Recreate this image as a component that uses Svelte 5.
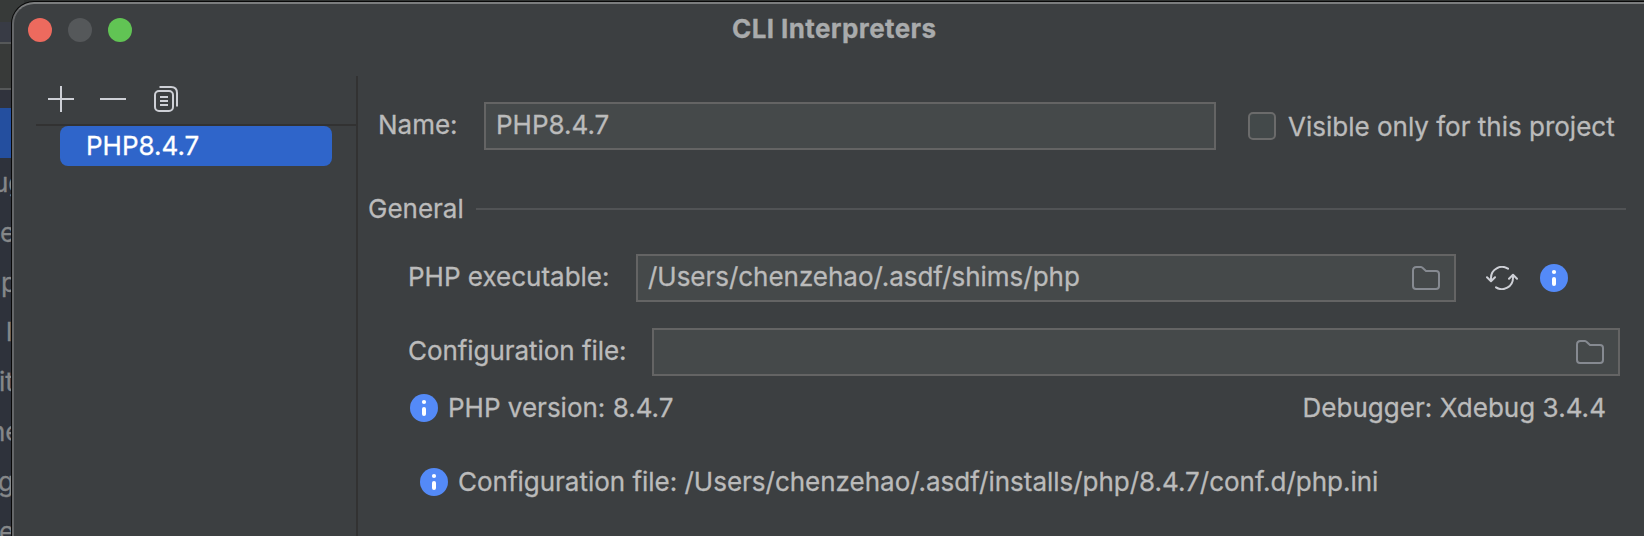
<script>
  const behind = ['ug', 'e', 'p', 'l', 'it', 'ne', 'g', 'e'];
  const offsets = [-7, 0, 1, 6, -1, -10, -2, -1];
</script>

{#snippet info()}
  <svg class="info" viewBox="0 0 28 28"><circle cx="14" cy="14" r="14" fill="#548af7" /><circle cx="14" cy="8" r="2.1" fill="#fff" /><rect x="12" y="13" width="4" height="9" rx="2" fill="#fff" /></svg>
{/snippet}

{#snippet folder()}
  <svg class="folder" viewBox="0 0 28 24"><path d="M1 4.5Q1 1 4.5 1H8.8Q9.6 1 10.2 1.6L14 5H24Q27 5 27 8V20Q27 23 24 23H4Q1 23 1 20Z" fill="none" stroke="#868a91" stroke-width="2" /></svg>
{/snippet}

<div class="screen">
  <div class="backdrop">
    <div class="b-top"></div>
    <div class="b-tab"></div>
    <div class="b-bar"></div>
    <div class="b-gap"></div>
    <div class="b-selected"></div>
    <div class="b-list">
      {#each behind as word, i}
        <div style="margin-left:{offsets[i]}px">{word}</div>
      {/each}
    </div>
  </div>

  <div class="window">
    <header>
      <div class="lights"><i class="red"></i><i class="grey"></i><i class="green"></i></div>
      <h1>CLI Interpreters</h1>
    </header>

    <div class="body">
      <aside>
        <div class="tools">
          <svg width="26" height="26" viewBox="0 0 26 26"><path d="M13 0V26M0 13H26" stroke="#ced0d6" stroke-width="2" /></svg>
          <svg width="26" height="26" viewBox="0 0 26 26"><path d="M0 13H26" stroke="#ced0d6" stroke-width="2" /></svg>
          <svg class="copy" width="24" height="26" viewBox="0 0 24 26" fill="none" stroke="#ced0d6" stroke-width="2"><rect x="1" y="5" width="18" height="20" rx="4" /><path d="M5.5 1H17Q23 1 23 7V20.5M6 11H14M6 15H14M6 19H14" /></svg>
        </div>
        <div class="item">PHP8.4.7</div>
      </aside>

      <main>
        <div class="row name">
          <label for="name">Name:</label>
          <div class="field" id="name"><span>PHP8.4.7</span></div>
          <div class="check"></div>
          <span class="visible">Visible only for this project</span>
        </div>
        <div class="section"><span>General</span><hr /></div>
        <div class="row exe">
          <span class="lab">PHP executable:</span>
          <div class="field"><span>/Users/chenzehao/.asdf/shims/php</span>{@render folder()}</div>
          <svg class="refresh" width="32" height="24" viewBox="0 0 32 24" fill="none" stroke="#ced0d6" stroke-width="2" stroke-linecap="round" stroke-linejoin="round"><path d="M22 2.7A11 11 0 0 0 5 12V15M1 11.2L5 15.2L9 11.2M10 21.3A11 11 0 0 0 27 12V9M23 12.8L27 8.8L31 12.8" /></svg>
          {@render info()}
        </div>
        <div class="row conf">
          <span class="lab">Configuration file:</span>
          <div class="field">{@render folder()}</div>
        </div>
        <div class="row version">
          {@render info()}
          <span class="ver">PHP version: 8.4.7</span>
          <span class="dbg">Debugger: Xdebug 3.4.4</span>
        </div>
        <div class="row ini">
          {@render info()}
          <span class="path">Configuration file: /Users/chenzehao/.asdf/installs/php/8.4.7/conf.d/php.ini</span>
        </div>
      </main>
    </div>
  </div>
</div>

<style>
  :global(body) { margin: 0; background: #3c3f41; overflow: hidden; }
  .screen { width: 1644px; height: 536px; overflow: hidden; display: flex; background: #303332; font: 400 26px/32px Inter, "Liberation Sans", sans-serif; -webkit-text-stroke: 0.3px currentColor; color: #bbb; white-space: nowrap; box-sizing: border-box; }
  .screen * { box-sizing: border-box; }
  .backdrop { width: 24px; flex: none; height: 536px; overflow: hidden; color: #858789; background: #2e323b; }
  .b-top { height: 22px; background: #373a39; }
  .b-tab { height: 20px; background: #383b45; }
  .b-bar { height: 48px; background: #383a39; border-top: 2px solid #565859; border-bottom: 2px solid #565859; }
  .b-gap { height: 18px; background: #30333d; }
  .b-selected { height: 50px; background: #244f9f; }
  .b-list { padding-top: 9px; }
  .b-list div { height: 49.8px; }
  .window { width: 1640px; flex: none; height: 560px; margin: 2px 0 0 -12px; border: 2px solid #656769; border-top-color: #7b7d7e; border-radius: 22px 0 0 0; background: #3c3f41; box-shadow: 0 0 0 1px #080808; }
  header { height: 72px; display: flex; position: relative; padding: 14px 0 0 14px; }
  .lights { display: flex; gap: 16px; }
  .lights i { width: 24px; height: 24px; border-radius: 50%; }
  .red { background: #ed6a5e; }
  .grey { background: #55585a; }
  .green { background: #61c454; }
  h1 { font: 700 26px/32px Inter, sans-serif; margin: -5px 0 0 600px; color: #a9abac; letter-spacing: 0.4px; }
  .body { display: flex; height: 480px; }
  aside { width: 344px; flex: none; border-right: 2px solid #323232; padding-left: 22px; }
  .tools { height: 50px; border-bottom: 2px solid #323232; padding: 10px 0 0 12px; display: flex; gap: 26px; }
  .copy { margin-left: 2px; }
  .item { width: 272px; height: 40px; margin-left: 24px; border-radius: 8px; background: #2f65ca; color: #fff; padding: 4px 0 0 26px; }
  main { flex: 1; padding-top: 26px; }
  .row { display: flex; align-items: center; height: 48px; }
  .field { height: 48px; flex: none; border: 2px solid #646464; background: #45494a; display: flex; align-items: center; justify-content: space-between; padding: 0 14px 0 10px; }
  .field > span, label, .lab { position: relative; top: -1px; }
  label { width: 106px; }
  .name { padding-left: 20px; }
  .name .field { width: 732px; }
  .check { width: 28px; height: 28px; border: 2px solid #6b6b6b; border-radius: 5px; background: #43494a; margin-left: 32px; }
  .visible { margin-left: 12px; padding-top: 2px; }
  .section { height: 32px; margin-top: 43px; padding-left: 10px; display: flex; align-items: center; width: 1268px; }
  .section span { width: 108px; flex: none; }
  hr { flex: 1; height: 2px; border: 0; background: #515355; margin: 0; }
  .exe { margin-top: 29px; }
  .lab { padding-left: 50px; width: 278px; flex: none; }
  .exe .field { width: 820px; letter-spacing: -0.03px; }
  .refresh { margin-left: 30px; }
  .refresh + :global(.info) { margin-left: 22px; }
  .info { width: 28px; height: 28px; flex: none; }
  .folder { width: 28px; height: 24px; margin-left: auto; }
  .conf { margin-top: 26px; }
  .conf .lab { width: 294px; letter-spacing: -0.05px; }
  .conf .field { width: 968px; }
  .version { height: 28px; margin-top: 18px; padding-left: 52px; width: 1248px; }
  .ver { margin-left: 10px; }
  .dbg { margin-left: auto; letter-spacing: 0.04px; }
  .ini { height: 28px; margin-top: 46px; padding-left: 62px; gap: 10px; }
  .path { letter-spacing: -0.015px; }
</style>
